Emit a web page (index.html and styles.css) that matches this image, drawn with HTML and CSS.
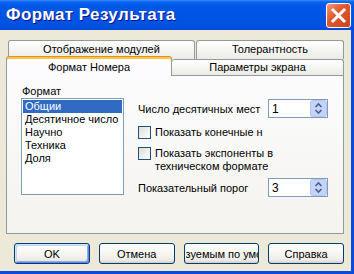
FILE: index.html
```html
<!DOCTYPE html>
<html lang="ru">
<head>
    <meta charset="UTF-8">
    <title>Формат Результата</title>
    <link rel="stylesheet" href="styles.css">
</head>
<body>
    <div class="window">
        <div class="titlebar">
            <span class="title">Формат Результата</span>
            <div class="close">
                <svg width="23" height="23" viewBox="0 0 23 23"><path d="M6 6 L17 17 M17 6 L6 17" stroke="#fff" stroke-width="3" stroke-linecap="square"/></svg>
            </div>
        </div>
        <div class="dialog">
            <div class="tabrow back">
                <div class="tab tab-modules">Отображение модулей</div>
                <div class="tab tab-tol">Толерантность</div>
            </div>
            <div class="tabrow front">
                <div class="tab tab-active">Формат Номера</div>
                <div class="tab tab-screen">Параметры экрана</div>
            </div>
            <div class="panel">
                <div class="format-col">
                    <div class="label">Формат</div>
                    <ul class="listbox">
                        <li class="selected">Общии</li>
                        <li>Десятичное число</li>
                        <li>Научно</li>
                        <li>Техника</li>
                        <li>Доля</li>
                    </ul>
                </div>
                <div class="options">
                    <div class="field-row">
                        <span class="field-label">Число десятичных мест</span>
                        <div class="spin">
                            <span>1</span>
                            <svg width="17" height="17" viewBox="0 0 17 17"><rect x="0.5" y="0.5" width="16" height="16" rx="2" fill="#C3D3FA" stroke="#B2C5F2"/><path d="M5.5 7 L8.5 4 L11.5 7 M5.5 10 L8.5 13 L11.5 10" fill="none" stroke="#4D6185" stroke-width="1.6"/></svg>
                        </div>
                    </div>
                    <div class="check">
                        <span class="box"></span>
                        <span class="check-text">Показать конечные н</span>
                    </div>
                    <div class="check">
                        <span class="box"></span>
                        <span class="check-text">Показать экспоненты в<br>техническом формате</span>
                    </div>
                    <div class="field-row threshold">
                        <span class="field-label">Показательный порог</span>
                        <div class="spin">
                            <span>3</span>
                            <svg width="17" height="17" viewBox="0 0 17 17"><rect x="0.5" y="0.5" width="16" height="16" rx="2" fill="#C3D3FA" stroke="#B2C5F2"/><path d="M5.5 7 L8.5 4 L11.5 7 M5.5 10 L8.5 13 L11.5 10" fill="none" stroke="#4D6185" stroke-width="1.6"/></svg>
                        </div>
                    </div>
                </div>
            </div>
            <div class="buttons">
                <button class="btn default">OK</button>
                <button class="btn">Отмена</button>
                <button class="btn clipped"><span>зуемым по умо</span></button>
                <button class="btn">Справка</button>
            </div>
        </div>
    </div>
</body>
</html>
```

FILE: styles.css
```css
body {
    margin: 0;
    font-family: "Liberation Sans", Arial, sans-serif;
    font-size: 11px;
    color: #000;
}
.window {
    width: 354px;
    height: 274px;
    display: flex;
    flex-direction: column;
    overflow: hidden;
}
.titlebar {
    height: 30px;
    flex-shrink: 0;
    display: flex;
    align-items: center;
    justify-content: space-between;
    padding: 0 3px 0 6px;
    background: linear-gradient(#3A8CFB 0, #0A62F0 2px, #0058E8 6px, #0054E3 50%, #0052E1 85%, #0049D8 100%);
}
.title {
    color: white;
    font-weight: bold;
    font-size: 17px;
    text-shadow: 1px 1px #0F1089;
    letter-spacing: 0.4px;
}
.close {
    width: 25px;
    height: 25px;
    box-sizing: border-box;
    border: 1px solid #fff;
    border-radius: 3px;
    background: linear-gradient(135deg, #F29A78, #E2592F 40%, #C9431C);
    display: flex;
    align-items: center;
    justify-content: center;
}
.dialog {
    flex: 1;
    background-color: #ECE9D8;
    border-right: 3px solid #0A4BDD;
    border-bottom: 3px solid #0A4BDD;
    padding: 10px 7px 0 6px;
}
.tabrow {
    display: flex;
}
.tabrow.back {
    height: 19px;
    padding-left: 2px;
    gap: 1px;
}
.tabrow.front {
    height: 20px;
    margin-top: -3px;
    align-items: flex-start;
    position: relative;
    z-index: 1;
}
.tab {
    box-sizing: border-box;
    border: 1px solid #919B9C;
    border-bottom: none;
    border-radius: 3px 3px 0 0;
    background: linear-gradient(#FFFFFF, #F3F3EF 60%, #ECEBE6);
    text-align: center;
    line-height: 13px;
}
.tab-modules {
    width: 187px;
    height: 19px;
    padding-top: 2px;
}
.tab-tol {
    width: 148px;
    height: 19px;
    padding-top: 2px;
}
.tab-active {
    width: 166px;
    height: 20px;
    padding-top: 4px;
    border-top-color: #E68B2C;
    box-shadow: inset 0 2px #FFC73C;
    background: #FCFCFE;
}
.tab-screen {
    width: 172px;
    height: 16px;
    margin-top: 3px;
    padding-top: 1px;
    border-left: none;
}
.panel {
    height: 159px;
    margin-top: -1px;
    box-sizing: border-box;
    border: 1px solid #919B9C;
    background: linear-gradient(#FCFCFE, #F4F3EE);
    display: flex;
}
.format-col {
    margin-left: 14px;
    padding-top: 9px;
}
.label {
    line-height: 13px;
    padding-left: 1px;
}
.listbox {
    list-style: none;
    margin: 0;
    padding: 1px;
    width: 103px;
    height: 97px;
    box-sizing: border-box;
    border: 1px solid #7F9DB9;
    background: white;
}
.listbox li {
    height: 13px;
    line-height: 13px;
    padding-left: 2px;
    white-space: nowrap;
}
.listbox li.selected {
    background-color: #316AC5;
    color: white;
}
.options {
    margin-left: 14px;
    padding-top: 23px;
}
.field-row {
    display: flex;
    align-items: center;
    height: 19px;
}
.field-label {
    width: 130px;
}
.spin {
    width: 60px;
    height: 19px;
    box-sizing: border-box;
    border: 1px solid #7F9DB9;
    background: white;
    display: flex;
    align-items: center;
    justify-content: space-between;
    padding-left: 3px;
    font-size: 12px;
}
.check {
    display: flex;
    align-items: flex-start;
    margin-top: 8px;
}
.box {
    width: 13px;
    height: 13px;
    box-sizing: border-box;
    border: 1px solid #1C5180;
    background: linear-gradient(135deg, #DCDCD7, #FFFFFF);
    flex-shrink: 0;
}
.check-text {
    margin-left: 4px;
    line-height: 13px;
    white-space: nowrap;
}
.field-row.threshold {
    margin-top: 5px;
}
.buttons {
    display: flex;
    gap: 9px;
    margin-top: 9px;
    padding-left: 8px;
}
.btn {
    width: 76px;
    height: 21px;
    box-sizing: border-box;
    border: 1px solid #003C74;
    border-radius: 3px;
    background: linear-gradient(#FFFFFF, #F4F3EE 60%, #ECEBE6 85%, #D6D0C5);
    box-shadow: inset 0 -1px #D6D0C5;
    font-family: "Liberation Sans", Arial, sans-serif;
    font-size: 11px;
    color: #000;
    padding: 0;
    display: flex;
    align-items: center;
    justify-content: center;
    white-space: nowrap;
}
.btn.default {
    box-shadow: inset 1px 1px #CEE7FF, inset -1px -1px #6982EE, inset 2px 2px #BCD4F6, inset -2px -2px #89ADE4;
}
.btn.clipped {
    justify-content: flex-start;
    padding-left: 1px;
}
.btn.clipped span {
    overflow: hidden;
    max-width: 72px;
}
```
